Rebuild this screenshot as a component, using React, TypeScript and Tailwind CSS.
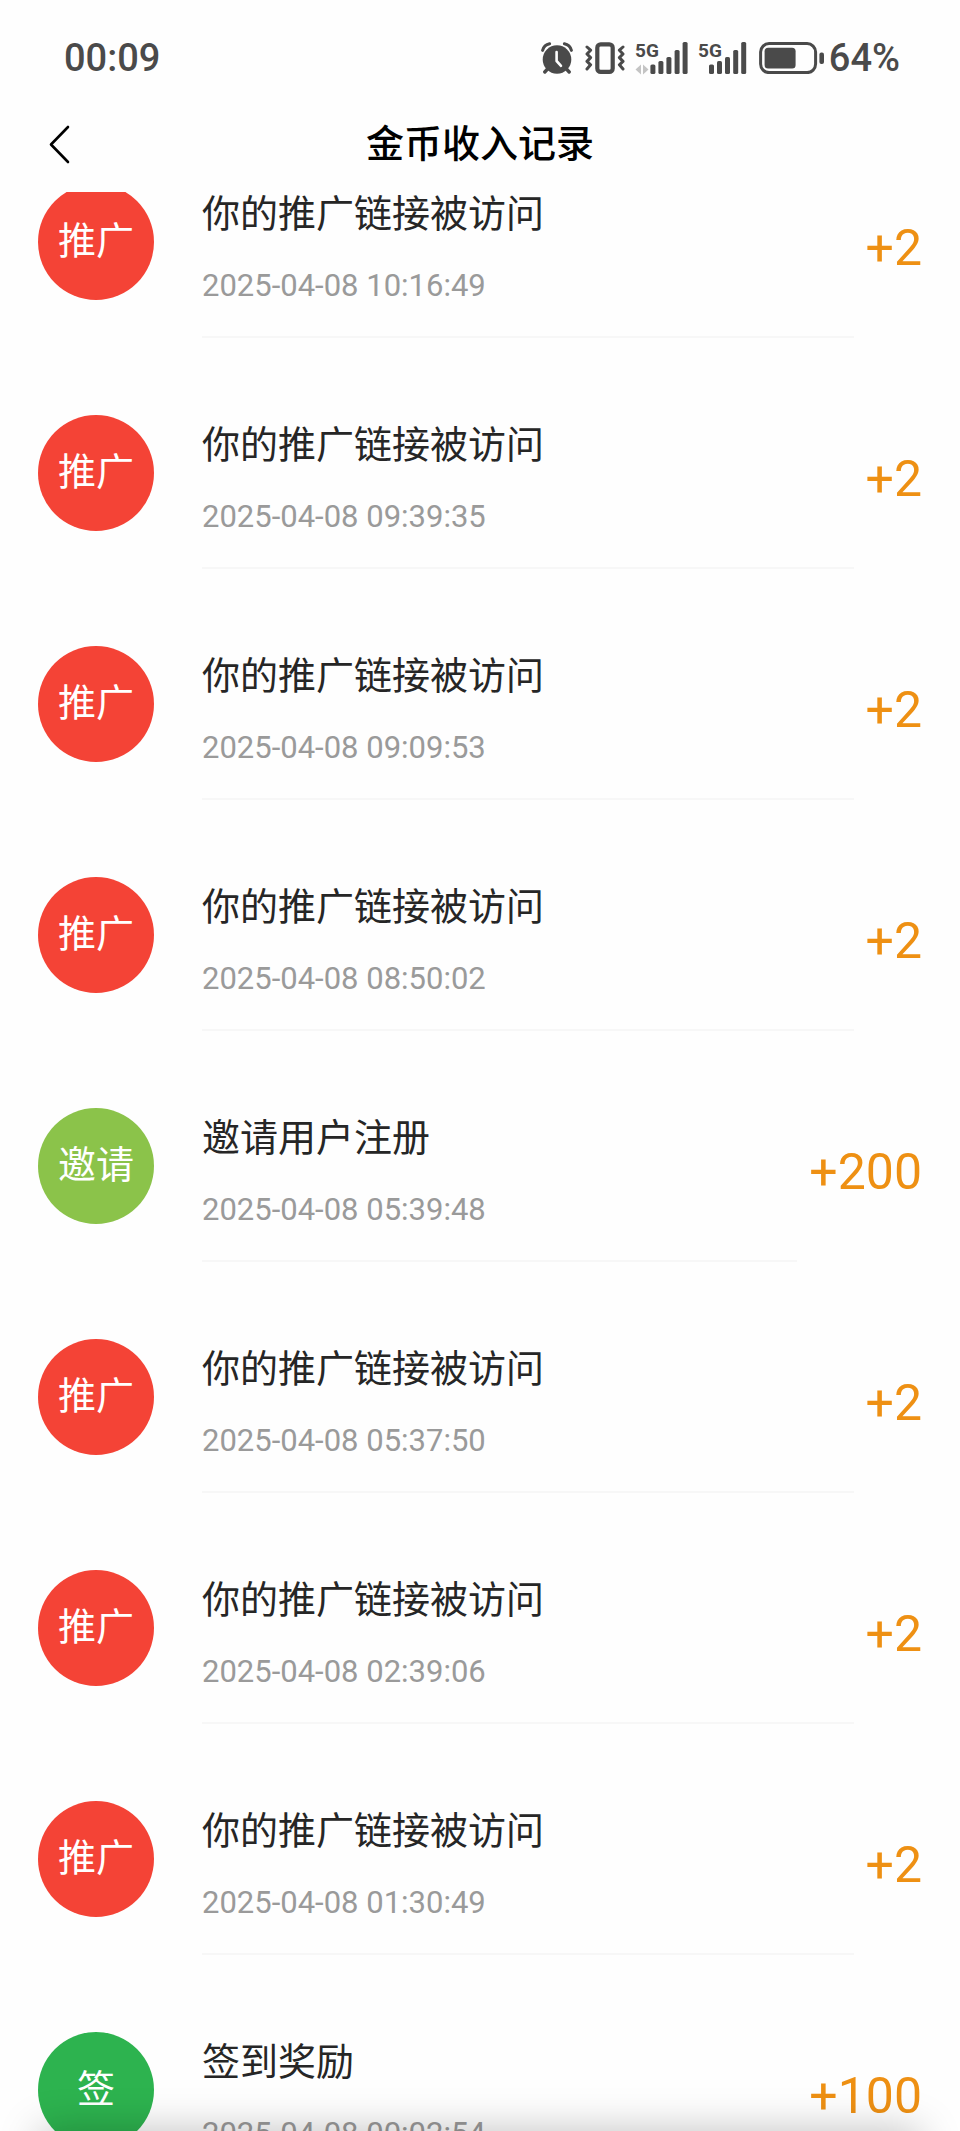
import React from 'react';

type RecordType = 'promo' | 'invite' | 'sign';

interface CoinRecord {
  type: RecordType;
  title: string;
  time: string;
  amount: number;
}

const badges: Record<RecordType, { label: string; color: string }> = {
  promo: { label: '推广', color: 'bg-[#f44336]' },
  invite: { label: '邀请', color: 'bg-[#8bc34a]' },
  sign: { label: '签', color: 'bg-[#2db34f]' },
};

const records: CoinRecord[] = [
  { type: 'promo', title: '你的推广链接被访问', time: '2025-04-08 10:16:49', amount: 2 },
  { type: 'promo', title: '你的推广链接被访问', time: '2025-04-08 09:39:35', amount: 2 },
  { type: 'promo', title: '你的推广链接被访问', time: '2025-04-08 09:09:53', amount: 2 },
  { type: 'promo', title: '你的推广链接被访问', time: '2025-04-08 08:50:02', amount: 2 },
  { type: 'invite', title: '邀请用户注册', time: '2025-04-08 05:39:48', amount: 200 },
  { type: 'promo', title: '你的推广链接被访问', time: '2025-04-08 05:37:50', amount: 2 },
  { type: 'promo', title: '你的推广链接被访问', time: '2025-04-08 02:39:06', amount: 2 },
  { type: 'promo', title: '你的推广链接被访问', time: '2025-04-08 01:30:49', amount: 2 },
  { type: 'sign', title: '签到奖励', time: '2025-04-08 00:02:54', amount: 100 },
];

const AlarmIcon = () => (
  <svg width="32" height="32" viewBox="0 0 32 32" fill="none" aria-hidden="true">
    <circle cx="16" cy="17.5" r="14.3" fill="currentColor" />
    <path d="M1.6 8.4A9 9 0 0 1 8.6 1.8M30.4 8.4A9 9 0 0 0 23.4 1.8" stroke="currentColor" strokeWidth="3" strokeLinecap="round" />
    <path d="M6.5 27L3.8 30M25.5 27l2.7 3" stroke="currentColor" strokeWidth="3.4" strokeLinecap="round" />
    <path d="M15.6 10v9l4.4 4.8" stroke="#fefefe" strokeWidth="2.6" strokeLinecap="round" strokeLinejoin="round" />
  </svg>
);

const VibrateIcon = () => (
  <svg width="40" height="32" viewBox="0 0 40 32" fill="none" stroke="currentColor" aria-hidden="true">
    <rect x="12.3" y="2.3" width="15.4" height="27.6" rx="3.4" strokeWidth="4.2" />
    <path d="M2 5l3.6 3.2L2 12l3.6 3.6L2 19.4l3.6 3.4L2 27" strokeWidth="3" strokeLinecap="round" strokeLinejoin="round" />
    <path d="M38 5l-3.6 3.2L38 12l-3.6 3.6L38 19.4l-3.6 3.4L38 27" strokeWidth="3" strokeLinecap="round" strokeLinejoin="round" />
  </svg>
);

const SignalBars = () => (
  <>
    <rect x="0" y="22.5" width="5" height="9.5" rx="1.6" />
    <rect x="8" y="19" width="5" height="13" rx="1.6" />
    <rect x="16" y="15" width="5" height="17" rx="1.6" />
    <rect x="24.2" y="8" width="5" height="24" rx="1.6" />
    <rect x="32.2" y="0" width="5" height="32" rx="1.6" />
  </>
);

const SignalIcon = ({ active = false }: { active?: boolean }) => (
  <svg className="overflow-visible" width={active ? 53 : 49} height="32" viewBox={active ? '0 0 53 32' : '0 0 49 32'} fill="currentColor" aria-hidden="true">
    <text x="0" y="15" fontSize="19" fontWeight="700">5G</text>
    {active && <path d="M6 22.5v10L0.5 27.5zM8 22.5v10l5.5-5z" fill="#c4c4c4" />}
    <g transform={active ? 'translate(15.4 0)' : 'translate(11 0)'}>
      <SignalBars />
    </g>
  </svg>
);

const BatteryIcon = () => (
  <svg width="66" height="32" viewBox="0 0 66 32" fill="none" aria-hidden="true">
    <rect x="1.6" y="1.6" width="55" height="29" rx="8.5" stroke="currentColor" strokeWidth="3" />
    <rect x="5.6" y="5.8" width="31" height="20.6" rx="3.5" fill="currentColor" />
    <rect x="60.4" y="10.5" width="4.6" height="11.5" rx="2" fill="currentColor" />
  </svg>
);

const StatusBar = () => (
  <div className="flex items-center justify-between pt-9 pl-16 pr-15 text-[#4a4a4a] text-[38px] leading-[44px] font-medium">
    <span>00:09</span>
    <div className="flex items-center">
      <AlarmIcon />
      <div className="ml-3 flex items-center gap-2.5">
        <VibrateIcon />
        <SignalIcon active />
        <SignalIcon />
      </div>
      <div className="ml-3 flex items-center gap-1">
        <BatteryIcon />
        <span>64%</span>
      </div>
    </div>
  </div>
);

const NavBar = () => (
  <header className="grid grid-cols-[80px_1fr_80px] items-center pt-9 pb-5">
    <button type="button" aria-label="返回" className="pl-12 py-2">
      <svg width="24" height="40" viewBox="0 0 24 40" fill="none" aria-hidden="true">
        <path d="M20 3L3 20.5L20 38" stroke="#000000" strokeWidth="2.6" strokeLinecap="round" strokeLinejoin="round" />
      </svg>
    </button>
    <h1 className="text-center text-[38px] leading-[56px] font-medium text-black">金币收入记录</h1>
  </header>
);

const RecordRow = ({ record }: { record: CoinRecord }) => {
  const badge = badges[record.type];
  return (
    <li className="flex items-start pb-[77px]">
      <div className={`mr-12 flex size-29 shrink-0 items-center justify-center rounded-full pb-0.5 text-[38px] leading-11 text-white ${badge.color}`}>
        {badge.label}
      </div>
      <div className="min-w-0 flex-1 border-b-2 border-[#f7f7f7] pt-2 pb-7.5">
        <p className="text-[38px] leading-11 text-[#262626]">{record.title}</p>
        <time className="mt-7.5 block text-[31px] leading-10 text-[#9a9a9a]">{record.time}</time>
      </div>
      <span className="ml-3 pt-9 text-[50px] leading-[56px] text-[#ee9013]">+{record.amount}</span>
    </li>
  );
};

export default function App() {
  return (
    <div className="relative flex h-screen flex-col overflow-hidden bg-[#fefefe] font-[Roboto,'Noto_Sans_CJK_SC',sans-serif]">
      <StatusBar />
      <NavBar />
      <main className="min-h-0 flex-1 overflow-hidden">
        <ul className="-mt-2 px-9.5">
          {records.map((record) => (
            <RecordRow key={record.time} record={record} />
          ))}
        </ul>
      </main>
      {/* shadow cast by the system bar under the page */}
      <div className="pointer-events-none absolute inset-x-10 top-full h-10 shadow-[0_0_40px_rgba(0,0,0,0.25)]" />
    </div>
  );
}
